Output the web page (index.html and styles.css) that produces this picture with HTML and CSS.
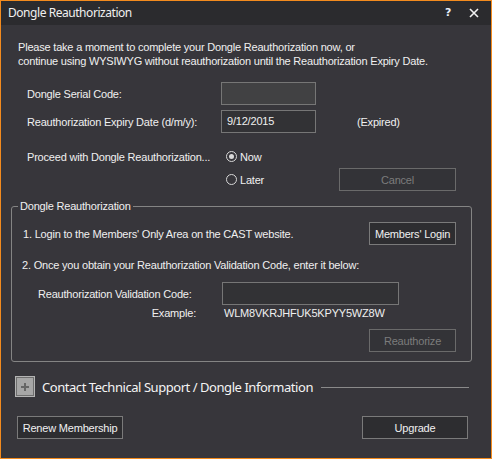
FILE: index.html
```html
<!DOCTYPE html>
<html>
<head>
<meta charset="utf-8">
<link rel="stylesheet" href="styles.css">
</head>
<body>
<div class="window">
  <div class="titlebar">
    <span class="title">Dongle Reauthorization</span>
    <span class="tb-btn help">?</span>
    <span class="tb-btn close"><svg width="10" height="10" viewBox="0 0 10 10"><path d="M1 1 L9 9 M9 1 L1 9" stroke="#f2f2f2" stroke-width="1.6" fill="none"/></svg></span>
  </div>
  <div class="content">
    <p class="intro">Please take a moment to complete your Dongle Reauthorization now, or<br>continue using WYSIWYG without reauthorization until the Reauthorization Expiry Date.</p>

    <div class="fields">
      <div class="frow">
        <span class="flabel">Dongle Serial Code:</span>
        <div class="input input-disabled"></div>
      </div>
      <div class="frow">
        <span class="flabel">Reauthorization Expiry Date (d/m/y):</span>
        <div class="input">9/12/2015</div>
        <span class="expired">(Expired)</span>
      </div>
    </div>

    <div class="proceed">
      <div class="prow">
        <span class="plabel">Proceed with Dongle Reauthorization...</span>
        <span class="radio"><span class="dot dot-checked"></span>Now</span>
      </div>
      <div class="prow">
        <span class="plabel"></span>
        <span class="radio"><span class="dot"></span>Later</span>
        <span class="btn btn-disabled btn-cancel">Cancel</span>
      </div>
    </div>

    <fieldset class="group">
      <legend>Dongle Reauthorization</legend>
      <div class="grow">
        <span>1. Login to the Members' Only Area on the CAST website.</span>
        <span class="btn btn-small">Members' Login</span>
      </div>
      <div class="step2">2. Once you obtain your Reauthorization Validation Code, enter it below:</div>
      <div class="vrow">
        <span class="vlabel">Reauthorization Validation Code:</span>
        <div class="input input-wide"></div>
      </div>
      <div class="erow">
        <span class="elabel">Example:</span>
        <span class="ecode">WLM8VKRJHFUK5KPYY5WZ8W</span>
      </div>
      <div class="rrow">
        <span class="btn btn-small btn-disabled">Reauthorize</span>
      </div>
    </fieldset>

    <div class="contact">
      <span class="plus"><svg width="10" height="10" viewBox="0 0 10 10"><path d="M5 1 V9 M1 5 H9" stroke="#666" stroke-width="2" fill="none"/></svg></span>
      <span class="contact-text">Contact Technical Support / Dongle Information</span>
      <span class="contact-line"></span>
    </div>

    <div class="bottom">
      <span class="btn btn-wide">Renew Membership</span>
      <span class="btn btn-wide">Upgrade</span>
    </div>
  </div>
</div>
</body>
</html>
```

FILE: styles.css
```css
* { box-sizing: border-box; }
html, body { margin: 0; padding: 0; background: #37363b; }
.window {
  width: 492px;
  height: 459px;
  border: 1px solid #f38b1e;
  background: #37363b;
  color: #f0f0f0;
  font-family: "Liberation Sans", Arial, sans-serif;
  font-size: 11px;
  line-height: 14px;
  letter-spacing: -0.2px;
  overflow: hidden;
}
.titlebar {
  height: 24px;
  background: #2b2b2e;
  display: flex;
  align-items: center;
  padding-left: 7px;
}
.title {
  font-family: "Noto Sans", "Open Sans", sans-serif;
  font-size: 12px;
  letter-spacing: -0.45px;
  color: #f0f0f0;
  flex: 1;
}
.tb-btn {
  display: flex;
  align-items: center;
  justify-content: center;
  width: 26px;
  height: 24px;
}
.help {
  font-family: "DejaVu Sans", sans-serif;
  font-weight: bold;
  font-size: 11px;
  color: #e8eef8;
  margin-left: 1px;
}
.close { margin-right: 4px; }

.content { padding-left: 10px; }
.intro {
  margin: 15px 0 0 7px;
}

.fields {
  margin-top: 14px;
  display: flex;
  flex-direction: column;
  gap: 5px;
}
.frow {
  display: flex;
  align-items: center;
  height: 23px;
}
.flabel {
  width: 194px;
  margin-left: 16px;
}
.input {
  width: 95px;
  height: 23px;
  border: 1px solid #767676;
  background: #323235;
  padding: 3px 5px;
  line-height: 15px;
}
.input-disabled { background: #414143; }
.input-wide { width: 177px; }
.expired { margin-left: 41px; }

.proceed { margin-top: 12px; }
.prow {
  display: flex;
  align-items: center;
  height: 23px;
}
.plabel {
  width: 199px;
  margin-left: 16px;
}
.radio {
  display: flex;
  align-items: center;
  width: 113px;
}
.dot {
  width: 11px;
  height: 11px;
  border: 1px solid #d8d8d8;
  border-radius: 50%;
  margin-right: 3px;
  display: flex;
  align-items: center;
  justify-content: center;
}
.dot-checked::after {
  content: "";
  width: 5px;
  height: 5px;
  border-radius: 50%;
  background: #d8d8d8;
}

.btn {
  display: flex;
  align-items: center;
  justify-content: center;
  height: 23px;
  border: 1px solid #7a7a7a;
  background: #2d2d30;
  color: #f0f0f0;
}
.btn-disabled {
  color: #7c7c7c;
  background: #333337;
  border-color: #6a6a6a;
}
.btn-cancel { width: 117px; }
.btn-small { width: 87px; }
.btn-wide { width: 106px; }

.group {
  margin: 8px 0 0 0;
  width: 461px;
  border: 1px solid #848484;
  border-radius: 3px;
  padding: 9px 15px 9px 11px;
}
.group legend {
  padding: 0 2px;
  margin-left: -5px;
  line-height: 14px;
}
.grow {
  display: flex;
  align-items: center;
  justify-content: space-between;
  height: 23px;
}
.step2 { margin: 13px 0 0 -1px; }
.vrow {
  display: flex;
  align-items: center;
  margin-top: 10px;
  height: 23px;
}
.vlabel {
  width: 184px;
  margin-left: 15px;
}
.erow {
  display: flex;
  margin-top: 1px;
}
.elabel {
  width: 158px;
  margin-left: 15px;
  text-align: right;
}
.ecode { margin-left: 28px; }
.rrow {
  display: flex;
  justify-content: flex-end;
  margin-top: 9px;
}

.contact {
  display: flex;
  align-items: center;
  margin-top: 14px;
  height: 21px;
  width: 458px;
}
.plus {
  width: 20px;
  height: 21px;
  margin-left: 4px;
  border: 1px solid #b4b4b4;
  box-shadow: inset 0 0 0 1px #6e6e6e;
  background: #a6a6a6;
  display: flex;
  align-items: center;
  justify-content: center;
}
.contact-text {
  margin-left: 7px;
  font-family: "Noto Sans", "Open Sans", sans-serif;
  font-size: 13px;
  letter-spacing: -0.45px;
  color: #f4f4f4;
}
.contact-line {
  margin-left: 8px;
  flex: 1;
  height: 1px;
  background: #8a8a8a;
  margin-top: 2px;
}

.bottom {
  display: flex;
  justify-content: space-between;
  margin-top: 19px;
  margin-left: 6px;
  width: 451px;
}
```
